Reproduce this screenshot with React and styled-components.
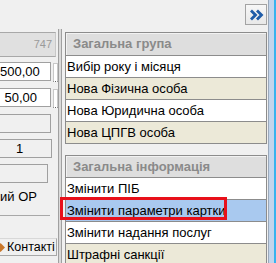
import React from 'react'
import styled, { createGlobalStyle } from 'styled-components'

const Global = createGlobalStyle`
  html, body {
    margin: 0;
    padding: 0;
    background: #f0f0f0;
  }
  body {
    font-family: "Liberation Sans", Arial, sans-serif;
  }
`

const Screen = styled.div`
  width: 276px;
  height: 263px;
  display: flex;
  overflow: hidden;
  background: #f0f0f0;
`

const Main = styled.div`
  width: 268px;
  display: flex;
  flex-direction: column;
`

const TopBar = styled.div`
  height: 32px;
  box-sizing: border-box;
  display: flex;
  justify-content: flex-end;
  align-items: flex-start;
  padding: 4px 1px 0 0;
`

const ExpandButton = styled.button`
  width: 22px;
  height: 21px;
  padding: 0;
  margin: 0;
  box-sizing: border-box;
  border: 1px solid #a3a3a3;
  background: linear-gradient(#f7f7f7, #e8e8e8);
  display: flex;
  align-items: center;
  justify-content: center;
`

const Body = styled.div`
  flex: 1;
  display: flex;
  min-height: 0;
`

const LeftPanel = styled.div`
  width: 58px;
  overflow: hidden;
  display: flex;
  flex-direction: column;
`

const LeftHeader = styled.div`
  width: 56px;
  height: 25px;
  box-sizing: border-box;
  background: #e0e0e0;
  border-top: 1px solid #a8a8a8;
  border-bottom: 1px solid #a8a8a8;
  border-right: 1px solid #c8c8c8;
  color: #9a9a9a;
  font-size: 11px;
  line-height: 23px;
  text-align: right;
  padding-right: 3px;
`

const Fields = styled.div`
  display: flex;
  flex-direction: column;
  gap: 6px;
  margin-top: 5px;
`

const FieldRow = styled.div`
  display: flex;
  align-items: stretch;
  gap: 2px;
`

const Field = styled.div`
  width: ${p => p.$width}px;
  height: 19px;
  box-sizing: border-box;
  border: 1px solid #a0a0a0;
  border-left: none;
  background: ${p => (p.$muted ? '#f0f0f0' : '#ffffff')};
  font-size: 13px;
  line-height: 17px;
  color: #000;
  text-align: ${p => p.$align || 'right'};
  padding-right: ${p => (p.$align === 'center' ? 12 : 13)}px;
`

const Grip = styled.div`
  width: 3px;
  height: 17px;
  margin-top: 1px;
  background: #fff;
  border: 1px solid #c8c8c8;
  border-bottom: 1px dotted #606060;
`

const Caption = styled.div`
  margin-top: 5px;
  font-size: 13px;
  line-height: 18px;
  white-space: nowrap;
  color: #000;
`

const Rule = styled.div`
  width: 50px;
  height: 1px;
  background: #a8a8a8;
  margin-top: 9px;
`

const TabStrip = styled.div`
  margin-top: 22px;
  width: 57px;
  height: 18px;
  box-sizing: border-box;
  border-top: 1px solid #d8d8d8;
  border-bottom: 1px solid #a8a8a8;
  border-right: 1px solid #a8a8a8;
  display: flex;
  align-items: center;
  gap: 2px;
  font-size: 12.5px;
  white-space: nowrap;
  overflow: hidden;
`

const TabIcon = styled.svg`
  margin-left: -4px;
  flex: none;
`

const Splitter = styled.div`
  width: 2px;
  margin-top: -3px;
  margin-right: 3px;
  border-left: 1px solid #a0a0a0;
  border-right: 1px solid #a0a0a0;
  background: #dadada;
`

const RightPanel = styled.div`
  width: 202px;
  display: flex;
  flex-direction: column;
  gap: 11px;
`

const Group = styled.div`
  border: 1px solid #8c8c8c;
  background: #fff;
`

const GroupHeader = styled.div`
  height: ${p => p.$h || 22}px;
  line-height: ${p => p.$h || 22}px;
  background: #dedede;
  box-shadow: inset 1px 1px 0 #f2f2f2;
  color: #8a8a8a;
  font-weight: bold;
  font-size: 13px;
  padding-left: 7px;
`

const Item = styled.div`
  position: relative;
  height: 21px;
  line-height: 21px;
  border-top: 1px solid #8c8c8c;
  padding-left: 1px;
  font-size: 13px;
  color: #000;
  white-space: nowrap;
  background: ${p =>
    p.$selected ? '#a9c9ef' : p.$tone === 'beige' ? '#ece9d8' : '#ffffff'};
`

const Marker = styled.div`
  position: absolute;
  left: -6px;
  top: -3px;
  width: 167px;
  height: 23px;
  box-sizing: border-box;
  border: 3px solid #e8101a;
  pointer-events: none;
`

const SideStrip = styled.div`
  width: 8px;
  box-sizing: border-box;
  border-left: 1px solid #9aa8ba;
  border-right: 2px solid #37b3ee;
  background: #c3d5eb;
`

const ChevronsIcon = () => (
  <svg width="15" height="12" viewBox="0 0 15 12">
    <path
      d="M2 1.5 L6.5 6 L2 10.5 M8 1.5 L12.5 6 L8 10.5"
      fill="none"
      stroke="#1f5ca8"
      strokeWidth="2.8"
    />
  </svg>
)

const groups = [
  {
    title: 'Загальна група',
    items: [
      { label: 'Вибір року і місяця', tone: 'white' },
      { label: 'Нова Фізична особа', tone: 'beige' },
      { label: 'Нова Юридична особа', tone: 'white' },
      { label: 'Нова ЦПГВ особа', tone: 'beige' },
    ],
  },
  {
    title: 'Загальна інформація',
    headerHeight: 21,
    items: [
      { label: 'Змінити ПІБ', tone: 'white' },
      { label: 'Змінити параметри картки', tone: 'white', selected: true },
      { label: 'Змінити надання послуг', tone: 'white' },
      { label: 'Штрафні санкції', tone: 'beige' },
    ],
  },
]

const fields = [
  { value: '500,00', width: 51 },
  { value: '50,00', width: 51 },
  { value: '', width: 51, muted: true, noGrip: true },
  { value: '1', width: 52, muted: true, align: 'center', noGrip: true },
  { value: '', width: 48, muted: true, noGrip: true },
]

export default function App() {
  return (
    <Screen>
      <Global />
      <Main>
        <TopBar>
          <ExpandButton aria-label="expand">
            <ChevronsIcon />
          </ExpandButton>
        </TopBar>
        <Body>
          <LeftPanel>
            <LeftHeader>747</LeftHeader>
            <Fields>
              {fields.map((f, i) => (
                <FieldRow key={i}>
                  <Field $width={f.width} $muted={f.muted} $align={f.align}>
                    {f.value}
                  </Field>
                  {!f.noGrip && <Grip />}
                </FieldRow>
              ))}
            </Fields>
            <Caption>ий ОР</Caption>
            <Rule />
            <TabStrip>
              <TabIcon width="9" height="9" viewBox="0 0 10 10">
                <path d="M5 0 L10 5 L5 10 L0 5 Z" fill="#c9772a" />
              </TabIcon>
              Контакті
            </TabStrip>
          </LeftPanel>
          <Splitter />
          <RightPanel>
            {groups.map(g => (
              <Group key={g.title}>
                <GroupHeader $h={g.headerHeight}>{g.title}</GroupHeader>
                {g.items.map(it => (
                  <Item key={it.label} $tone={it.tone} $selected={it.selected}>
                    {it.label}
                    {it.selected && <Marker />}
                  </Item>
                ))}
              </Group>
            ))}
          </RightPanel>
        </Body>
      </Main>
      <SideStrip />
    </Screen>
  )
}
